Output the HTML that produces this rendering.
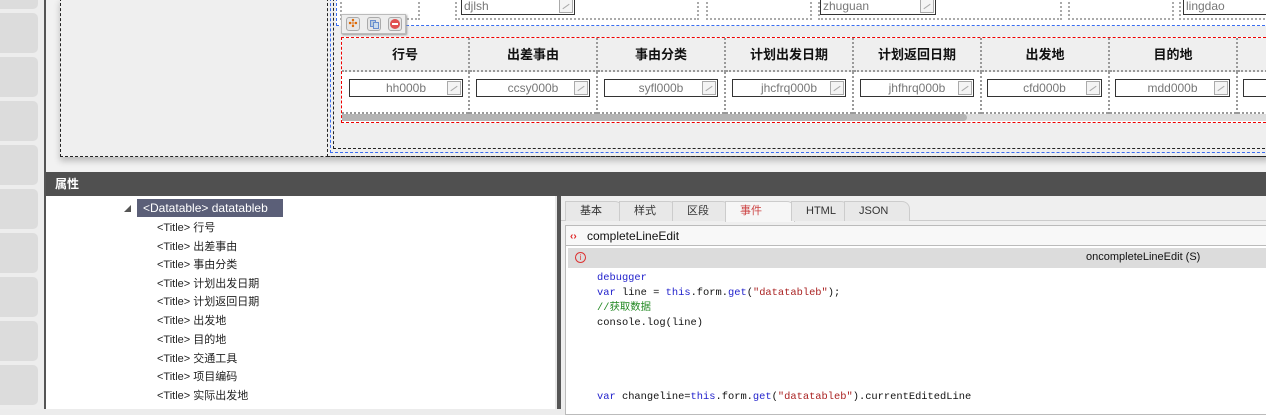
<!DOCTYPE html>
<html><head><meta charset="utf-8">
<style>
*{margin:0;padding:0;box-sizing:border-box}
body{width:1266px;height:409px;overflow:hidden;background:#ececec;position:relative;font-family:"Liberation Sans","Noto Sans CJK SC",sans-serif;font-size:12px}
.a{position:absolute}
.tile{position:absolute;left:0;width:38px;height:40px;background:#dcdcdc;border-radius:0 5px 5px 0}
.inp{position:absolute;height:18px;border:1px solid #333;background:#fff;color:#777;font-size:12px;line-height:16px;text-align:center}
.inp i{position:absolute;right:1px;top:1px;width:14px;height:14px;border:1px solid #aaa;background:#f4f4f4}
.inp i:after{content:"";position:absolute;left:2px;top:6px;width:8px;height:1px;background:#aaa;transform:rotate(-35deg)}
.hd{position:absolute;top:38px;height:34px;line-height:34px;text-align:center;font-weight:bold;font-size:13px;color:#111;background:#efefef;border-right:2px dotted #999;border-bottom:2px dotted #999}
.bd{position:absolute;top:72px;height:42px;border-right:2px dotted #999}
.tr{position:absolute;left:157px;font-size:11px;color:#222}
.tab{position:absolute;top:201px;height:20px;border:1px solid #ccc;border-bottom:none;border-radius:0 8px 0 0;background:#e8e8e8;font-size:11px;line-height:19px;padding-left:14px;color:#333}
.code{position:absolute;left:597px;font-family:"Liberation Mono","Noto Sans CJK SC",monospace;font-size:10.4px;line-height:15px;height:15px;color:#111;white-space:nowrap}
</style></head><body>
<div class="a" style="left:0;top:0;width:44px;height:409px;background:#ededed"></div>
<div class="tile" style="top:-31px"></div><div class="tile" style="top:13px"></div><div class="tile" style="top:57px"></div><div class="tile" style="top:101px"></div><div class="tile" style="top:145px"></div><div class="tile" style="top:189px"></div><div class="tile" style="top:233px"></div><div class="tile" style="top:277px"></div><div class="tile" style="top:321px"></div><div class="tile" style="top:365px"></div>
<div class="a" style="left:44px;top:0;width:2px;height:409px;background:#555"></div>
<div class="a" style="left:46px;top:0;width:1220px;height:172px;background:#f2f2f2"></div>
<div class="a" style="left:60px;top:-2px;width:1210px;height:159px;border:1px dashed #222;background:#efefef;box-shadow:0 4px 6px #bbb"></div>
<div class="a" style="left:327px;top:-2px;width:945px;height:159px;border:1px dashed #222"></div>
<div class="a" style="left:330px;top:-2px;width:940px;height:155px;border:1px dashed #3a6df0;border-top:none"></div>
<div class="a" style="left:333px;top:-2px;width:937px;height:151px;border:1px dashed #222;border-top:none"></div>
<div class="a" style="left:336px;top:-2px;width:934px;height:28px;background:#fff;border-bottom:1px dashed #3a6df0;border-left:1px dashed #3a6df0"></div>
<div class="a" style="left:340px;top:-2px;width:80px;height:22px;border:2px dotted #aaa;border-top:none"></div>
<div class="a" style="left:455px;top:-2px;width:244px;height:22px;border:2px dotted #aaa;border-top:none"></div>
<div class="a" style="left:706px;top:-2px;width:106px;height:22px;border:2px dotted #aaa;border-top:none"></div>
<div class="a" style="left:818px;top:-2px;width:244px;height:22px;border:2px dotted #aaa;border-top:none"></div>
<div class="a" style="left:1068px;top:-2px;width:106px;height:22px;border:2px dotted #aaa;border-top:none"></div>
<div class="a" style="left:1179px;top:-2px;width:90px;height:22px;border:2px dotted #aaa;border-top:none"></div>
<div class="inp" style="left:461px;top:-3px;width:114px;text-align:left;padding-left:2px">djlsh<i></i></div>
<div class="inp" style="left:820px;top:-3px;width:116px;text-align:left;padding-left:2px">zhuguan<i></i></div>
<div class="inp" style="left:1183px;top:-3px;width:90px;text-align:left;padding-left:2px">lingdao</div>
<div class="a" style="left:341px;top:37px;width:930px;height:86px;border:1px dashed #e00;background:#fff"></div>
<div class="hd" style="left:342px;width:128px">行号</div><div class="hd" style="left:470px;width:128px">出差事由</div><div class="hd" style="left:598px;width:128px">事由分类</div><div class="hd" style="left:726px;width:128px">计划出发日期</div><div class="hd" style="left:854px;width:128px">计划返回日期</div><div class="hd" style="left:982px;width:128px">出发地</div><div class="hd" style="left:1110px;width:128px">目的地</div><div class="hd" style="left:1238px;width:40px"></div>
<div class="bd" style="left:342px;width:128px"></div><div class="bd" style="left:470px;width:128px"></div><div class="bd" style="left:598px;width:128px"></div><div class="bd" style="left:726px;width:128px"></div><div class="bd" style="left:854px;width:128px"></div><div class="bd" style="left:982px;width:128px"></div><div class="bd" style="left:1110px;width:128px"></div>
<div class="a" style="left:342px;top:112px;width:930px;height:2px;border-top:2px dotted #999"></div>
<div class="inp" style="left:349px;top:79px;width:114px">hh000b<i></i></div>
<div class="inp" style="left:476px;top:79px;width:114px">ccsy000b<i></i></div>
<div class="inp" style="left:604px;top:79px;width:114px">syfl000b<i></i></div>
<div class="inp" style="left:732px;top:79px;width:114px">jhcfrq000b<i></i></div>
<div class="inp" style="left:860px;top:79px;width:114px">jhfhrq000b<i></i></div>
<div class="inp" style="left:987px;top:79px;width:115px">cfd000b<i></i></div>
<div class="inp" style="left:1115px;top:79px;width:115px">mdd000b<i></i></div>
<div class="inp" style="left:1243px;top:79px;width:30px"></div>
<div class="a" style="left:342px;top:114px;width:930px;height:7px;background:#ddd"></div>
<div class="a" style="left:342px;top:114px;width:625px;height:7px;background:#b4b4b4;border-radius:0 4px 4px 0"></div>
<div class="a" style="left:341px;top:14px;width:65px;height:20px;background:#eee;border:1px solid #bbb;box-shadow:1px 1px 2px #999"></div>
<div class="a" style="left:346px;top:17px;width:14px;height:14px;border:1px solid #aaa;border-radius:3px;background:#e6e6e6;color:#d60;font-size:11px;line-height:12px;text-align:center">✣</div>
<div class="a" style="left:367px;top:17px;width:14px;height:14px;border:1px solid #aaa;border-radius:3px;background:#e6e6e6"><div class="a" style="left:2px;top:2px;width:6px;height:7px;border:1px solid #6a8fd0;background:#bcd"></div><div class="a" style="left:5px;top:4px;width:6px;height:7px;border:1px solid #6a8fd0;background:#cde"></div></div>
<div class="a" style="left:388px;top:17px;width:14px;height:14px;border:1px solid #aaa;border-radius:3px;background:#e6e6e6"><div class="a" style="left:1px;top:1px;width:10px;height:10px;border-radius:50%;background:#e05050"></div><div class="a" style="left:3px;top:5px;width:6px;height:2px;background:#fff"></div></div>
<div class="a" style="left:46px;top:172px;width:1220px;height:24px;background:#505050;color:#fff;font-weight:bold;font-size:12px;line-height:24px;padding-left:9px">属性</div>
<div class="a" style="left:46px;top:196px;width:511px;height:213px;background:#fff"></div>
<div class="a" style="left:555px;top:196px;width:2px;height:213px;background:#e8e8e8"></div>
<div class="a" style="left:557px;top:196px;width:4px;height:213px;background:#555"></div>
<div class="a" style="left:124px;top:204px;font-size:7px;color:#555">◢</div>
<div class="a" style="left:137px;top:199px;width:146px;height:18px;background:#5b5f78;color:#fff;font-size:12px;line-height:18px;padding-left:6px">&lt;Datatable&gt; datatableb</div>
<div class="tr" style="top:219px">&lt;Title&gt; 行号</div>
<div class="tr" style="top:238px">&lt;Title&gt; 出差事由</div>
<div class="tr" style="top:256px">&lt;Title&gt; 事由分类</div>
<div class="tr" style="top:275px">&lt;Title&gt; 计划出发日期</div>
<div class="tr" style="top:293px">&lt;Title&gt; 计划返回日期</div>
<div class="tr" style="top:312px">&lt;Title&gt; 出发地</div>
<div class="tr" style="top:331px">&lt;Title&gt; 目的地</div>
<div class="tr" style="top:350px">&lt;Title&gt; 交通工具</div>
<div class="tr" style="top:368px">&lt;Title&gt; 项目编码</div>
<div class="tr" style="top:387px">&lt;Title&gt; 实际出发地</div>
<div class="a" style="left:561px;top:196px;width:705px;height:213px;background:#efefef"></div>
<div class="a" style="left:561px;top:220px;width:705px;height:1px;background:#ccc"></div>
<div class="tab" style="left:565px;width:58px">基本</div>
<div class="tab" style="left:619px;width:58px">样式</div>
<div class="tab" style="left:672px;width:58px">区段</div>
<div class="tab" style="left:725px;width:70px;background:#f6f6f6;color:#c44;height:21px">事件</div>
<div class="tab" style="left:791px;width:58px">HTML</div>
<div class="tab" style="left:844px;width:66px">JSON</div>
<div class="a" style="left:565px;top:225px;width:705px;height:190px;background:#fff;border:1px solid #bbb"></div>
<div class="a" style="left:566px;top:226px;width:705px;height:20px;background:#f8f8f8;border-bottom:1px solid #bbb;font-size:12px;line-height:20px;padding-left:21px;color:#111">completeLineEdit</div>
<div class="a" style="left:570px;top:231px;color:#d22;font-size:10px;font-weight:bold">‹›</div>
<div class="a" style="left:568px;top:248px;width:700px;height:20px;background:#dcdcdc"></div>
<div class="a" style="left:575px;top:252px;width:11px;height:11px;border:1px solid #d33;border-radius:50%;color:#d33;font-size:8px;line-height:9px;text-align:center">i</div>
<div class="a" style="left:1086px;top:251px;font-size:11px;color:#111">oncompleteLineEdit (S)</div>
<div class="code" style="top:271px;color:#22c">debugger</div>
<div class="code" style="top:286px"><span style="color:#22c">var</span> line = <span style="color:#22c">this</span>.form.<span style="color:#22c">get</span>(<span style="color:#a22">"datatableb"</span>);</div>
<div class="code" style="top:301px;color:#282">//获取数据</div>
<div class="code" style="top:316px">console.log(line)</div>
<div class="code" style="top:390px"><span style="color:#22c">var</span> changeline=<span style="color:#22c">this</span>.form.<span style="color:#22c">get</span>(<span style="color:#a22">"datatableb"</span>).currentEditedLine</div>
</body></html>
